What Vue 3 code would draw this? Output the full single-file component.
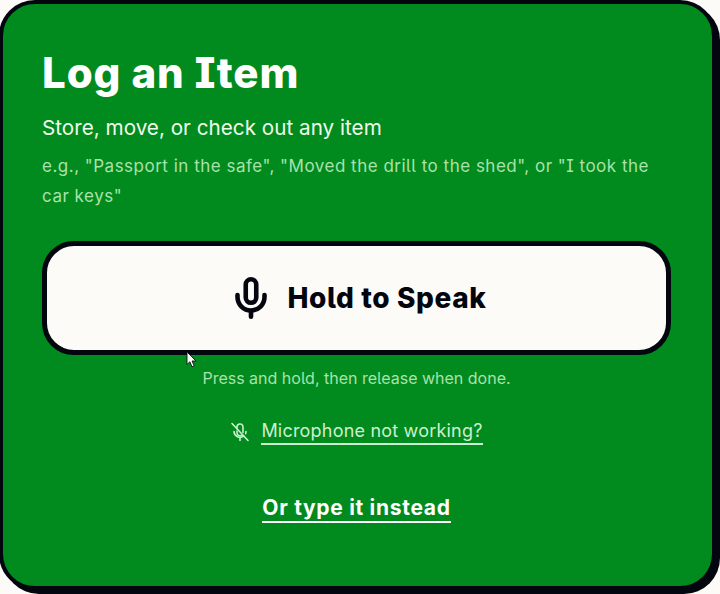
<script setup>
// Log an item card, static voice-input state
const title = 'Log an Item';
const hint = 'e.g., "Passport in the safe", "Moved the drill to the shed", or "I took the car keys"';
</script>

<template>
    <div class="page">
        <section class="card">
            <h1 class="title">{{ title }}</h1>
            <p class="subtitle">Store, move, or check out any item</p>
            <p class="hint">{{ hint }}</p>

            <button class="speak" type="button">
                <svg class="mic" viewBox="0 0 32 42" fill="none" stroke="currentColor" stroke-width="4.6" stroke-linecap="round">
                    <rect x="10.75" y="2.3" width="10.5" height="23.5" rx="5.25" />
                    <path d="M2.5 18v2a13.5 13.5 0 0 0 27 0v-2" />
                    <path d="M16 35v4.7" />
                </svg>
                <span>Hold to Speak</span>
            </button>

            <p class="press">Press and hold, then release when done.</p>

            <a class="trouble">
                <svg class="mic-off" viewBox="0 0 20 20" fill="none" stroke="currentColor" stroke-width="1.6" stroke-linecap="round" stroke-linejoin="round">
                    <path d="M2 1.5l16 17" />
                    <path d="M7 6.5V5a3 3 0 0 1 5.8-1.1M13 5v5.5M12 13a3 3 0 0 1-5-2.2V9" />
                    <path d="M4 9.5a6 6 0 0 0 9.6 4.6M16 9.5a6 6 0 0 1-.4 2.1M10 15.5v3" />
                </svg>
                <span class="trouble-text">Microphone not working?</span>
            </a>

            <a class="type-link">Or type it instead</a>
        </section>

        <!-- mouse pointer that was in the capture -->
        <svg class="pointer" viewBox="0 0 12 20">
            <path d="M1 1v14l3.2-3 2.4 5.5 2.4-1-2.4-5.4H11z" fill="#fff" stroke="#111" stroke-width="1" />
        </svg>
    </div>
</template>

<style scoped>
.page {
    position: relative;
    width: 720px;
    height: 594px;
    overflow: hidden;
    background: #fdfbf7;
    font-family: Inter, "Liberation Sans", sans-serif;
    font-feature-settings: "ss02";
}

.card {
    box-sizing: border-box;
    width: 717px;
    height: 590px;
    margin-left: -1px;
    padding: 44px 41px 0 39px;
    display: flex;
    flex-direction: column;
    background: #018a1e;
    border: 4px solid #03060f;
    border-radius: 36px;
    box-shadow: 4px 4px 0 #03060f;
}

.title {
    margin: 0;
    font-size: 42px;
    line-height: 50px;
    font-weight: 800;
    letter-spacing: 0.9px;
    color: #fff;
}

.subtitle {
    margin: 15px 0 0;
    font-size: 20.7px;
    line-height: 30px;
    color: #eefaeb;
}

.hint {
    margin: 8px 0 0;
    font-size: 17px;
    line-height: 30px;
    letter-spacing: 0.5px;
    color: #a9e2ab;
}

.speak {
    box-sizing: border-box;
    width: 100%;
    height: 114px;
    margin-top: 30px;
    padding: 0 0 0 8px;
    display: flex;
    align-items: center;
    justify-content: center;
    gap: 21px;
    background: #fdfbf7;
    border: 5px solid #03060f;
    border-radius: 32px;
    color: #03060f;
    font-family: inherit;
    font-feature-settings: inherit;
    font-size: 28px;
    font-weight: 800;
    letter-spacing: 0.6px;
}

.mic {
    width: 32px;
    height: 42px;
}

.press {
    margin: 12px 0 0;
    text-align: center;
    font-size: 16px;
    line-height: 22px;
    color: #a9e2ab;
}

.trouble {
    align-self: center;
    margin-top: 30px;
    display: flex;
    align-items: center;
    gap: 11px;
    font-size: 18px;
    line-height: 24px;
    letter-spacing: 0.2px;
    color: #cdf0cf;
}

.mic-off {
    width: 20px;
    height: 20px;
}

.trouble-text {
    border-bottom: 2px solid #cdf0cf;
}

.type-link {
    align-self: center;
    margin-top: 50px;
    font-size: 21px;
    line-height: 26px;
    font-weight: 700;
    letter-spacing: 0.7px;
    color: #fff;
    border-bottom: 2px solid #fff;
}

.pointer {
    position: absolute;
    left: 186px;
    top: 351px;
    width: 11px;
    height: 18px;
}
</style>
